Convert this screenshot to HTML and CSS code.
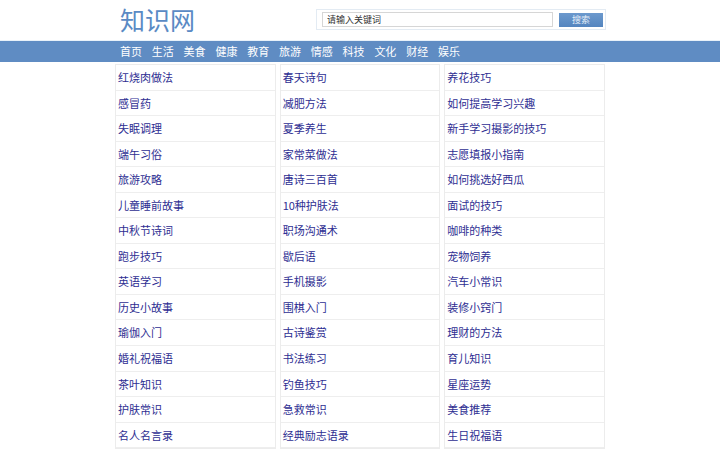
FILE: index.html
```html
<!DOCTYPE html>
<html lang="zh-CN">
<head>
    <meta charset="UTF-8">
    <meta name="viewport" content="width=device-width, initial-scale=1.0">
    <title>知识网</title>
    <link rel="stylesheet" href="styles.css">
</head>
<body>
    <div class="header">
        <div class="logo">知识网</div>
        <form class="search">
            <input type="text" class="search-input" value="请输入关键词">
            <button type="button" class="search-btn">搜索</button>
        </form>
    </div>

    <div class="nav">
        <ul class="nav-list">
            <li><a href="#">首页</a></li>
            <li><a href="#">生活</a></li>
            <li><a href="#">美食</a></li>
            <li><a href="#">健康</a></li>
            <li><a href="#">教育</a></li>
            <li><a href="#">旅游</a></li>
            <li><a href="#">情感</a></li>
            <li><a href="#">科技</a></li>
            <li><a href="#">文化</a></li>
            <li><a href="#">财经</a></li>
            <li><a href="#">娱乐</a></li>
        </ul>
    </div>

    <div class="lists">
        <ul class="list">
            <li><a href="#">红烧肉做法</a></li>
            <li><a href="#">感冒药</a></li>
            <li><a href="#">失眠调理</a></li>
            <li><a href="#">端午习俗</a></li>
            <li><a href="#">旅游攻略</a></li>
            <li><a href="#">儿童睡前故事</a></li>
            <li><a href="#">中秋节诗词</a></li>
            <li><a href="#">跑步技巧</a></li>
            <li><a href="#">英语学习</a></li>
            <li><a href="#">历史小故事</a></li>
            <li><a href="#">瑜伽入门</a></li>
            <li><a href="#">婚礼祝福语</a></li>
            <li><a href="#">茶叶知识</a></li>
            <li><a href="#">护肤常识</a></li>
            <li><a href="#">名人名言录</a></li>
        </ul>
        <ul class="list">
            <li><a href="#">春天诗句</a></li>
            <li><a href="#">减肥方法</a></li>
            <li><a href="#">夏季养生</a></li>
            <li><a href="#">家常菜做法</a></li>
            <li><a href="#">唐诗三百首</a></li>
            <li><a href="#">10种护肤法</a></li>
            <li><a href="#">职场沟通术</a></li>
            <li><a href="#">歇后语</a></li>
            <li><a href="#">手机摄影</a></li>
            <li><a href="#">围棋入门</a></li>
            <li><a href="#">古诗鉴赏</a></li>
            <li><a href="#">书法练习</a></li>
            <li><a href="#">钓鱼技巧</a></li>
            <li><a href="#">急救常识</a></li>
            <li><a href="#">经典励志语录</a></li>
        </ul>
        <ul class="list">
            <li><a href="#">养花技巧</a></li>
            <li><a href="#">如何提高学习兴趣</a></li>
            <li><a href="#">新手学习摄影的技巧</a></li>
            <li><a href="#">志愿填报小指南</a></li>
            <li><a href="#">如何挑选好西瓜</a></li>
            <li><a href="#">面试的技巧</a></li>
            <li><a href="#">咖啡的种类</a></li>
            <li><a href="#">宠物饲养</a></li>
            <li><a href="#">汽车小常识</a></li>
            <li><a href="#">装修小窍门</a></li>
            <li><a href="#">理财的方法</a></li>
            <li><a href="#">育儿知识</a></li>
            <li><a href="#">星座运势</a></li>
            <li><a href="#">美食推荐</a></li>
            <li><a href="#">生日祝福语</a></li>
        </ul>
    </div>
</body>
</html>
```

FILE: styles.css
```css
body {
    margin: 0;
    background-color: #fff;
    font-family: "Noto Sans CJK SC", "Noto Sans", sans-serif;
    font-size: 11px;
    color: #333;
}
ul {
    list-style: none;
    margin: 0;
    padding: 0;
}
a {
    text-decoration: none;
}
.header {
    width: 490px;
    height: 40px;
    margin: 0 auto;
    display: flex;
    align-items: center;
    justify-content: space-between;
    box-sizing: border-box;
    padding-left: 5px;
}
.logo {
    font-size: 25px;
    line-height: 1;
    color: #5a8ac4;
    margin-top: -1px;
}
.search {
    display: flex;
    align-items: center;
    gap: 6px;
    width: 290px;
    height: 21px;
    box-sizing: border-box;
    margin: -1px -1px 0 0;
    padding: 0 2px 0 5px;
    border: 1px solid #e3ebf3;
}
.search-input {
    width: 231px;
    height: 15px;
    box-sizing: border-box;
    margin: 0;
    padding: 0 4px;
    border: 1px solid #d6d6d6;
    font-family: inherit;
    font-size: 9px;
    color: #333;
}
.search-btn {
    width: 44px;
    height: 14px;
    margin: 0;
    padding: 0;
    border: 0;
    background: linear-gradient(#6c99cd, #5485bf);
    color: #e6eef8;
    font-family: inherit;
    font-size: 9px;
    line-height: 14px;
}
.nav {
    height: 22px;
    background-color: #5f8cc3;
    border-top: 1px solid #e8f1f9;
    box-sizing: border-box;
}
.nav-list {
    width: 490px;
    margin: 0 auto;
    box-sizing: border-box;
    padding-left: 5px;
    display: flex;
    gap: 9px;
}
.nav-list li {
    width: 22.8px;
    line-height: 21px;
    white-space: nowrap;
}
.nav-list a {
    color: #fff;
}
.lists {
    width: 490px;
    margin: 2px auto 0;
    display: grid;
    grid-template-columns: repeat(3, 1fr);
    gap: 4px;
}
.list {
    border: 1px solid #ececec;
}
.list li {
    height: 24.55px;
    line-height: 24.55px;
    padding-left: 2px;
    border-bottom: 1px solid #eeeeee;
    white-space: nowrap;
    overflow: hidden;
}
.list a {
    color: #2e2e92;
}
```
